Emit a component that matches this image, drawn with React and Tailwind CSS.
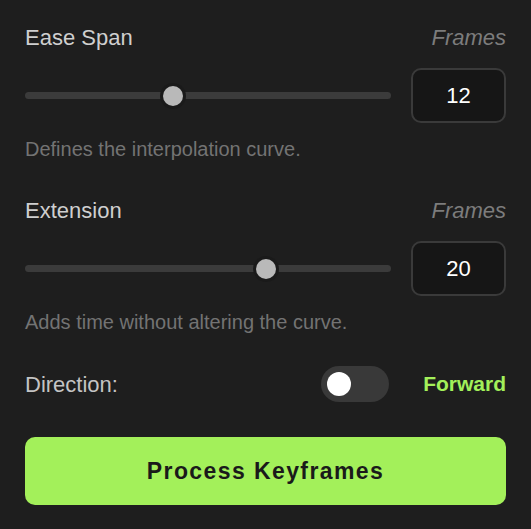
import { useState } from 'react';

const font = { fontFamily: '"Liberation Sans", Arial, Helvetica, sans-serif' };

const SliderField = ({ label, hint, value, max, onChange }) => {
  const pct = value / max;

  return (
    <div>
      <div className="flex items-center justify-between h-[26px]">
        <span className="text-[22px] leading-[26px] text-[#cfcfcf]">{label}</span>
        <span className="text-[22px] leading-[26px] italic text-[#7c7c7c]">Frames</span>
      </div>

      <div className="mt-[17px] flex items-center gap-[20px]">
        {/* Track + thumb */}
        <div
          className="relative flex-1 h-[20px] flex items-center cursor-pointer"
          onClick={(e) => {
            const r = e.currentTarget.getBoundingClientRect();
            const p = Math.min(1, Math.max(0, (e.clientX - r.left - 10) / (r.width - 20)));
            onChange(Math.round(p * max));
          }}
        >
          <div className="w-full h-[7px] rounded-full bg-[#3b3b3b]" />
          <div
            className="absolute top-0 w-[20px] h-[20px] rounded-full bg-[#b9b9b9] ring-[3px] ring-[#1a1a1a]"
            style={{ left: `calc(${pct} * (100% - 20px))` }}
          />
        </div>

        {/* Value box */}
        <div className="w-[95px] h-[55px] rounded-[10px] border-2 border-[#3a3a3a] bg-[#161616] flex items-center justify-center text-[22px] text-white">
          {value}
        </div>
      </div>

      <p className="mt-[14px] text-[20px] leading-[24px] text-[#737373]">{hint}</p>
    </div>
  );
};

export default function App() {
  const [ease, setEase] = useState(12);
  const [extension, setExtension] = useState(20);
  const [forward, setForward] = useState(true);

  return (
    <div className="w-[531px] h-[529px] bg-[#1e1e1e] px-[25px] pt-[25px]" style={font}>
      <SliderField
        label="Ease Span"
        hint="Defines the interpolation curve."
        value={ease}
        max={30}
        onChange={setEase}
      />

      <div className="mt-[37px]">
        <SliderField
          label="Extension"
          hint="Adds time without altering the curve."
          value={extension}
          max={30}
          onChange={setExtension}
        />
      </div>

      {/* Direction row */}
      <div className="mt-[32px] flex items-center justify-between">
        <span className="text-[22px] text-[#c4c4c4]">Direction:</span>
        <div className="flex items-center gap-[34px]">
          <button
            onClick={() => setForward(!forward)}
            className={`w-[68px] h-[36px] rounded-full bg-[#393939] p-[6px] flex ${forward ? 'justify-start' : 'justify-end'}`}
          >
            <span className="w-[24px] h-[24px] rounded-full bg-white" />
          </button>
          <span className="text-[21px] font-bold text-[#a3f05a]">
            {forward ? 'Forward' : 'Reverse'}
          </span>
        </div>
      </div>

      <button className="mt-[35px] w-full h-[68px] rounded-[10px] bg-[#a3f05a] text-[23px] font-bold tracking-[1.4px] text-[#1a1a1a]">
        Process Keyframes
      </button>
    </div>
  );
}
